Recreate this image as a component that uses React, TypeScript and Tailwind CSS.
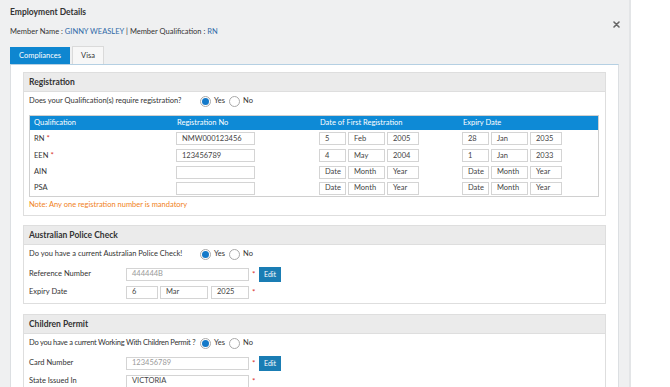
import React from "react";

const Radio = ({ checked }: { checked?: boolean }) => (
  <span className="w-[11px] h-[11px] rounded-full border border-[#a9a9a9] bg-white flex items-center justify-center shrink-0">
    {checked ? <span className="w-[7px] h-[7px] rounded-full bg-[#1479c9]" /> : null}
  </span>
);

const YesNo = () => (
  <div className="flex items-center">
    <Radio checked />
    <span className="ml-[3px] mr-[4px]">Yes</span>
    <Radio />
    <span className="ml-[3px]">No</span>
  </div>
);

const Inp = ({ w, v, muted }: { w: string; v?: string; muted?: boolean }) => (
  <div className={`${w} h-[13px] border border-[#d4d4d4] bg-white flex items-center pl-[5px] whitespace-nowrap ${muted ? "text-[#9a9a9a]" : "text-[#444]"}`}>
    {v}
  </div>
);

const Star = () => <span className="text-[#d9302c] ml-[3px] w-[4px] text-[8px]">*</span>;

const Edit = () => (
  <div className="ml-[3px] w-[22px] h-[15px] bg-[#1a7db4] text-white flex items-center justify-center text-[7px]">Edit</div>
);

const DateGroup = ({ d, m, y }: { d: string; m: string; y: string }) => (
  <div className="flex items-center">
    <Inp w="w-[27px]" v={d} />
    <div className="w-[2px]" />
    <Inp w="w-[37px]" v={m} />
    <div className="w-[2px]" />
    <Inp w="w-[32px]" v={y} />
  </div>
);

const rows = [
  { q: "RN", req: true, reg: "NMW000123456", a: ["5", "Feb", "2005"], b: ["28", "Jan", "2035"], h: "h-[17px]" },
  { q: "EEN", req: true, reg: "123456789", a: ["4", "May", "2004"], b: ["1", "Jan", "2033"], h: "h-[17px]" },
  { q: "AIN", req: false, reg: "", a: ["Date", "Month", "Year"], b: ["Date", "Month", "Year"], h: "h-[16px]" },
  { q: "PSA", req: false, reg: "", a: ["Date", "Month", "Year"], b: ["Date", "Month", "Year"], h: "h-[16px]" },
];

const SectionHeader = ({ t }: { t: string }) => (
  <div className="h-[19px] bg-[#ebebeb] border-b border-[#dedede] flex items-center pl-[5px] font-bold text-[8.5px] text-[#333]">{t}</div>
);

export default function App() {
  return (
    <div className="w-[670px] h-[387px] overflow-hidden flex bg-white text-[7.5px] text-[#333]" style={{ fontFamily: "Lato, 'Open Sans', sans-serif" }}>
      <div className="w-[631px] h-full bg-[#eff0f1] border-r-2 border-[#e3e5e7] flex flex-col relative shrink-0">
        <div className="px-[10px] relative">
          <div className="h-[24px] flex items-center font-bold text-[8.5px] text-[#333]">Employment Details</div>
          <div className="h-[16px] flex items-center">
            Member Name :&nbsp;<span className="text-[#2f6aa8]">GINNY WEASLEY</span>&nbsp;| Member Qualification :&nbsp;<span className="text-[#2f6aa8]">RN</span>
          </div>
          <div className="absolute left-[613px] top-[21px] w-[7px] h-[7px]">
            <svg viewBox="0 0 7 7" width="7" height="7">
              <path d="M1 1L6 6M6 1L1 6" stroke="#666" strokeWidth="1.6" strokeLinecap="round" />
            </svg>
          </div>
          <div className="flex items-end mt-[7px] h-[17px]">
            <div className="w-[60px] h-[17px] bg-[#0e86d0] text-white flex items-center justify-center">Compliances</div>
            <div className="ml-[2px] w-[32px] h-[18px] bg-[#f7f7f7] border border-b-0 border-[#dadada] flex items-center justify-center">Visa</div>
          </div>
        </div>
        <div className="mx-[10px] flex-1 bg-white border border-[#dcdfe2] border-t-[#b5d0e3] pt-[7px] px-[12px] flex flex-col">
          {/* Registration */}
          <div className="border border-[#dedede]">
            <SectionHeader t="Registration" />
            <div className="pl-[5px] pr-[6px] pb-[2px]">
              <div className="h-[18px] flex items-center">
                <div className="w-[171px] whitespace-nowrap">Does your Qualification(s) require registration?</div>
                <YesNo />
              </div>
              <div className="mt-[5px] border border-[#d0d0d0]">
                <div className="h-[14px] bg-[#0e8ad6] text-white grid grid-cols-[146px_143px_143px_1fr] items-center">
                  <div className="pl-[4px]">Qualification</div>
                  <div className="pl-[1px]">Registration No</div>
                  <div className="pl-[1px]">Date of First Registration</div>
                  <div className="pl-[1px]">Expiry Date</div>
                </div>
                {rows.map((r) => (
                  <div key={r.q} className={`${r.h} grid grid-cols-[146px_143px_143px_1fr] items-center`}>
                    <div className="pl-[4px]">
                      {r.q}
                      {r.req ? <span className="text-[#d9302c] text-[8px]"> *</span> : null}
                    </div>
                    <div>
                      <Inp w="w-[79px]" v={r.reg} />
                    </div>
                    <div>
                      <DateGroup d={r.a[0]} m={r.a[1]} y={r.a[2]} />
                    </div>
                    <div>
                      <DateGroup d={r.b[0]} m={r.b[1]} y={r.b[2]} />
                    </div>
                  </div>
                ))}
              </div>
              <div className="h-[16px] flex items-center text-[#f07f23]">Note: Any one registration number is mandatory</div>
            </div>
          </div>

          {/* Police check */}
          <div className="mt-[9px] border border-[#dedede]">
            <SectionHeader t="Australian Police Check" />
            <div className="pl-[5px] pb-[4px]">
              <div className="h-[18px] flex items-center">
                <div className="w-[171px] whitespace-nowrap">Do you have a current Australian Police Check!</div>
                <YesNo />
              </div>
              <div className="mt-[4px] h-[14px] flex items-center">
                <div className="w-[97px]">Reference Number</div>
                <Inp w="w-[123px]" v="444444B" muted />
                <Star />
                <Edit />
              </div>
              <div className="mt-[4px] h-[14px] flex items-center">
                <div className="w-[97px]">Expiry Date</div>
                <Inp w="w-[32px]" v="6" />
                <div className="w-[2px]" />
                <Inp w="w-[48px]" v="Mar" />
                <div className="w-[3px]" />
                <Inp w="w-[38px]" v="2025" />
                <Star />
              </div>
            </div>
          </div>

          {/* Children permit */}
          <div className="mt-[10px] border border-[#dedede]">
            <SectionHeader t="Children Permit" />
            <div className="pl-[5px] pb-[4px]">
              <div className="h-[18px] flex items-center">
                <div className="min-w-[171px] pr-[3px] whitespace-nowrap tracking-[-0.25px]">Do you have a current Working With Children Permit ?</div>
                <YesNo />
              </div>
              <div className="mt-[4px] h-[14px] flex items-center">
                <div className="w-[97px]">Card Number</div>
                <Inp w="w-[123px]" v="123456789" muted />
                <Star />
                <Edit />
              </div>
              <div className="mt-[4px] h-[14px] flex items-center">
                <div className="w-[97px]">State Issued In</div>
                <Inp w="w-[123px]" v="VICTORIA" />
                <Star />
              </div>
            </div>
          </div>
        </div>
      </div>
      <div className="flex-1 bg-white" />
    </div>
  );
}
